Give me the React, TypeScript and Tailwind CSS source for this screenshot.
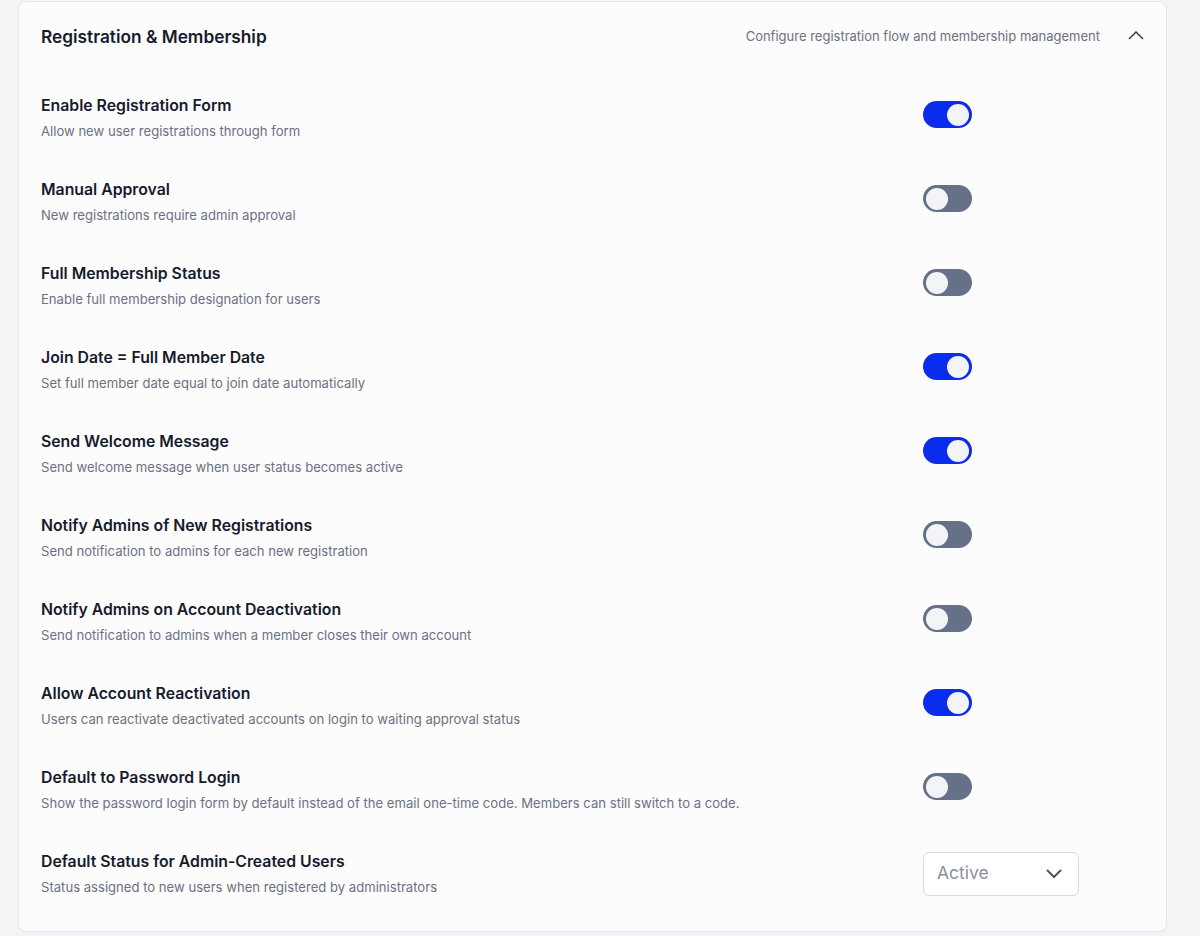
import React from "react";

type Setting = {
  title: string;
  description: string;
  enabled: boolean;
};

const settings: Setting[] = [
  { title: "Enable Registration Form", description: "Allow new user registrations through form", enabled: true },
  { title: "Manual Approval", description: "New registrations require admin approval", enabled: false },
  { title: "Full Membership Status", description: "Enable full membership designation for users", enabled: false },
  { title: "Join Date = Full Member Date", description: "Set full member date equal to join date automatically", enabled: true },
  { title: "Send Welcome Message", description: "Send welcome message when user status becomes active", enabled: true },
  { title: "Notify Admins of New Registrations", description: "Send notification to admins for each new registration", enabled: false },
  { title: "Notify Admins on Account Deactivation", description: "Send notification to admins when a member closes their own account", enabled: false },
  { title: "Allow Account Reactivation", description: "Users can reactivate deactivated accounts on login to waiting approval status", enabled: true },
  {
    title: "Default to Password Login",
    description:
      "Show the password login form by default instead of the email one-time code. Members can still switch to a code.",
    enabled: false,
  },
];

const Toggle: React.FC<{ on: boolean }> = ({ on }) => (
  <button
    type="button"
    className={
      on
        ? "flex h-[27px] w-[49px] items-center justify-end rounded-full bg-[#0a2ded] px-[3px]"
        : "flex h-[27px] w-[49px] items-center justify-start rounded-full bg-[#667189] px-[3px]"
    }
  >
    <span className="block h-[22px] w-[22px] rounded-full bg-[#f3f4f8]" />
  </button>
);

const RowText: React.FC<{ title: string; description: string }> = ({ title, description }) => (
  <div className="flex flex-1 flex-col gap-[3px]">
    <div className="text-[15.8px] font-semibold leading-6 text-[#161b2c]">{title}</div>
    <div className="text-[13.1px] leading-5 text-[#6b7180]">{description}</div>
  </div>
);

export default function App() {
  return (
    <div
      className="min-h-[936px] bg-[#f3f4f6] pt-px"
      style={{ fontFamily: "Inter, 'Noto Sans', sans-serif" }}
    >
      <div className="ml-[18px] w-[1149px] rounded-lg border border-[#e6e7eb] bg-[#fcfcfd] px-[22px] pb-[16px] pt-[21px]">
        {/* header */}
        <div className="flex h-7 items-center">
          <h2 className="flex-1 text-[17.3px] font-semibold leading-7 text-[#161b2c]">
            Registration &amp; Membership
          </h2>
          <span className="text-[13px] text-[#6b7180]">
            Configure registration flow and membership management
          </span>
          <svg width="16" height="9" viewBox="0 0 16 9" fill="none" className="mb-[4px] ml-[28px]">
            <path d="M1 8 8 1l7 7" stroke="#2a2f3a" strokeWidth="1.4" />
          </svg>
        </div>

        <div className="mt-[24px] flex flex-col">
          {settings.map((s) => (
            <div key={s.title} className="flex items-center py-[18.5px]">
              <RowText title={s.title} description={s.description} />
              <div className="w-[221px] pb-[5px]">
                <Toggle on={s.enabled} />
              </div>
            </div>
          ))}

          <div className="flex items-center py-[18.5px]">
            <RowText
              title="Default Status for Admin-Created Users"
              description="Status assigned to new users when registered by administrators"
            />
            <div className="w-[221px] pt-[1px]">
              <div className="flex h-[44px] w-[156px] items-center justify-between rounded-md border border-[#d9dbe0] bg-white pl-[13px] pr-[16px]">
                <span className="text-[17.5px] text-[#8b909b]">Active</span>
                <svg width="16" height="10" viewBox="0 0 16 10" fill="none">
                  <path d="M1.5 1.5 8 8l6.5-6.5" stroke="#4a5366" strokeWidth="2" strokeLinecap="round" strokeLinejoin="round" />
                </svg>
              </div>
            </div>
          </div>
        </div>
      </div>
    </div>
  );
}
